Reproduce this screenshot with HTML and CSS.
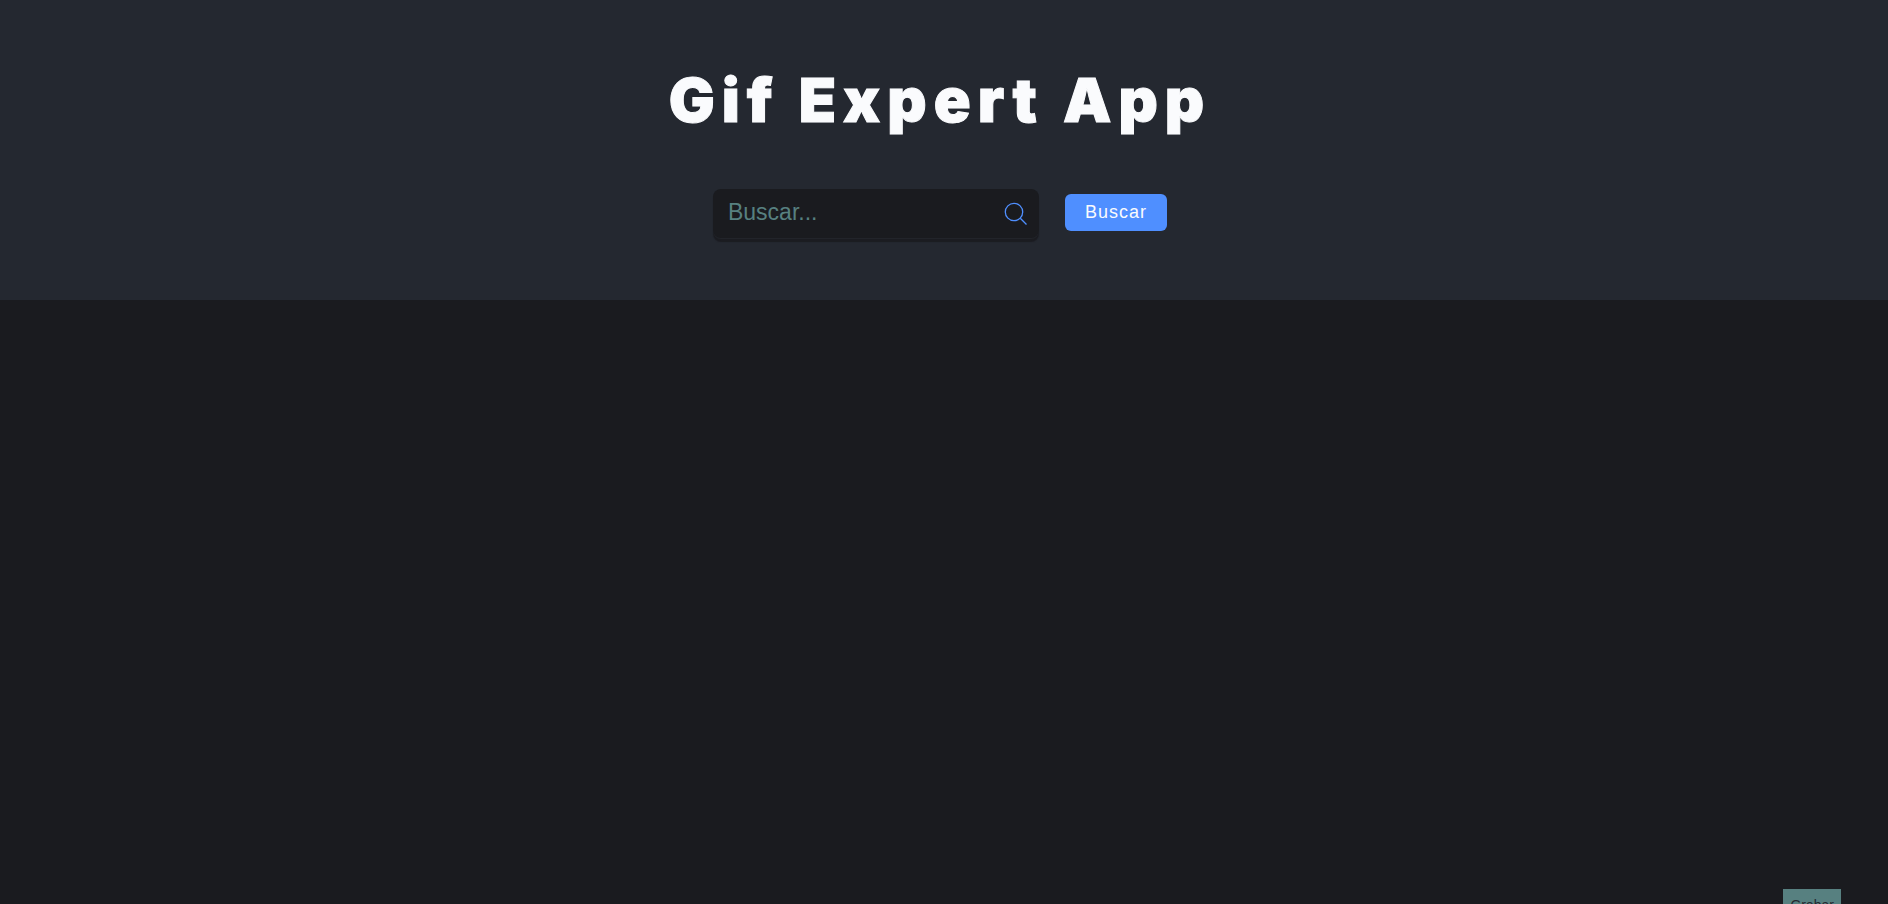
FILE: index.html
```html
<!DOCTYPE html>
<html lang="es">
<head>
<meta charset="utf-8">
<title>Gif Expert App</title>
<link rel="stylesheet" href="styles.css">
</head>
<body>
<header class="header">
  <h1 class="title">Gif Expert App</h1>
  <form class="search">
    <div class="field">
      <input class="field-input" type="text" placeholder="Buscar..." aria-label="Buscar">
      <svg class="field-icon" viewBox="0 0 24 24" aria-hidden="true"><circle cx="10" cy="10" r="8.7"/><path d="M16.3 16.3 22.5 22.5"/></svg>
    </div>
    <button class="submit" type="submit">Buscar</button>
  </form>
</header>
<main class="results"></main>
<button class="record" type="button">Grabar</button>
</body>
</html>
```
FILE: styles.css
```css
* {
  box-sizing: border-box;
}

body {
  margin: 0;
  min-height: 100vh;
  overflow: hidden;
  background: #1a1b1f;
  font-family: "Liberation Sans", Arial, sans-serif;
}

.header {
  display: flex;
  flex-direction: column;
  align-items: center;
  gap: 49px;
  padding: 60px 32px 62px 24px;
  background: #242830;
}

.title {
  margin: 0;
  color: #fafbfd;
  font-family: Inter, "Open Sans", sans-serif;
  font-size: 61px;
  font-weight: 900;
  line-height: 80px;
  letter-spacing: 7px;
  -webkit-text-stroke: 1px #fafbfd;
}

.search {
  display: flex;
  align-items: center;
  gap: 26px;
}

.field {
  display: flex;
  align-items: center;
  width: 326px;
  height: 49px;
  padding: 0 11px 0 15px;
  border-radius: 8px;
  background: #1a1b1f;
  box-shadow: 0 1px 0 #22242a, 0 4px 1px #1b1c21;
}

.field-input {
  flex: 1;
  min-width: 0;
  padding: 0 0 3px;
  border: 0;
  outline: 0;
  background: none;
  color: #fafbfd;
  font: 23px "Liberation Sans", Arial, sans-serif;
}

.field-input::placeholder {
  color: #578080;
  opacity: 1;
}

.field-icon {
  width: 24px;
  height: 24px;
  fill: none;
  stroke: #4f8fff;
  stroke-width: 1.3;
}

.submit {
  margin-bottom: 2px;
  padding: 8px 20px;
  border: 0;
  border-radius: 6px;
  background: #4f8fff;
  color: #fafbfd;
  font: 18px/21px "Liberation Sans", Arial, sans-serif;
  letter-spacing: 1px;
}

.record {
  position: fixed;
  right: 47px;
  bottom: -17px;
  padding: 8px 7px;
  border: 0;
  background: #578080;
  color: #242830;
  font: 14px/16px "Liberation Sans", Arial, sans-serif;
}
```
